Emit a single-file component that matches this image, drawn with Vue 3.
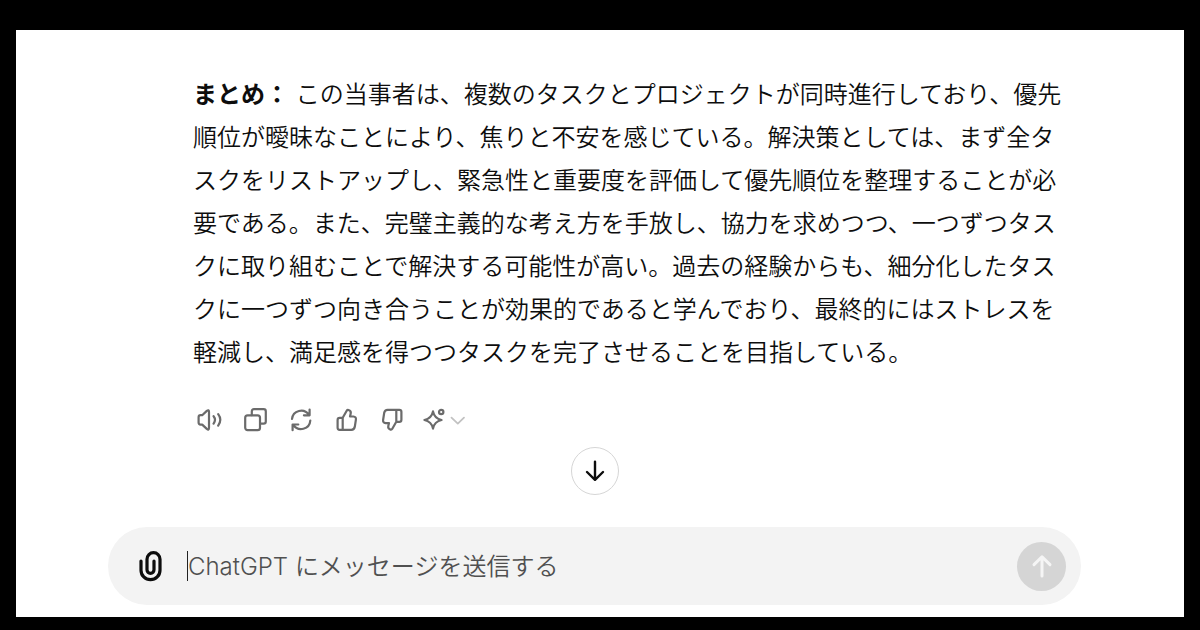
<script setup>
import { ref } from 'vue'

const message = ref('')
const summary =
  'この当事者は、複数のタスクとプロジェクトが同時進行しており、優先順位が曖昧なことにより、焦りと不安を感じている。解決策としては、まず全タスクをリストアップし、緊急性と重要度を評価して優先順位を整理することが必要である。また、完璧主義的な考え方を手放し、協力を求めつつ、一つずつタスクに取り組むことで解決する可能性が高い。過去の経験からも、細分化したタスクに一つずつ向き合うことが効果的であると学んでおり、最終的にはストレスを軽減し、満足感を得つつタスクを完了させることを目指している。'
</script>

<template>
  <div class="page">
    <main class="chat">
      <div class="column">
        <article class="reply">
          <p><strong>まとめ：</strong> {{ summary }}</p>
          <div class="actions">
            <div class="group">
              <button type="button" aria-label="読み上げる">
                <svg width="28" height="28" viewBox="0 0 28 28">
                  <path d="M3.6 11.2Q3.6 9.2 5.6 9.2H7.2L11.8 4.9Q14 3.2 14 6V21.8Q14 24.6 11.8 22.9L7.2 18.6H5.6Q3.6 18.6 3.6 16.6Z" />
                  <path d="M18.6 10.2Q21.4 13.8 18.6 17.6M23.2 8.2Q27.4 13.8 23.2 19.6" />
                </svg>
              </button>
              <button type="button" aria-label="コピーする">
                <svg width="28" height="28" viewBox="0 0 28 28">
                  <rect x="4.2" y="9.3" width="14.8" height="14.8" rx="2.4" />
                  <path d="M10.8 9.2V5.4Q10.8 3.2 13 3.2H22.6Q24.8 3.2 24.8 5.4V15.4Q24.8 17.6 22.6 17.6H19.2" />
                </svg>
              </button>
              <button type="button" aria-label="再生成する">
                <svg width="28" height="28" viewBox="0 0 28 28">
                  <path d="M5 13A9.2 9.2 0 0 1 21.8 8.8M22.6 3.6V9.3H16.9" />
                  <path d="M23.3 14.5A9.2 9.2 0 0 1 6.4 18.9M5.6 24.2V18.5H11.3" />
                </svg>
              </button>
              <button type="button" aria-label="良い回答">
                <svg width="28" height="28" viewBox="0 0 28 28">
                  <path d="M9.7 11.8L13.7 4.8Q14.3 3.7 15.5 4Q18.3 4.8 17.7 7.5L17 10.5H20.4Q23.3 10.8 22.9 13.6L21.8 20.8Q21.2 23.8 18.4 23.8H6.6Q4.6 23.8 4.6 21.8V13.9Q4.6 11.8 6.7 11.8H9.7V23.8" />
                </svg>
              </button>
              <button type="button" aria-label="良くない回答">
                <svg width="28" height="28" viewBox="0 0 28 28">
                  <path transform="rotate(180 13.5 13.8)" d="M9.7 11.8L13.7 4.8Q14.3 3.7 15.5 4Q18.3 4.8 17.7 7.5L17 10.5H20.4Q23.3 10.8 22.9 13.6L21.8 20.8Q21.2 23.8 18.4 23.8H6.6Q4.6 23.8 4.6 21.8V13.9Q4.6 11.8 6.7 11.8H9.7V23.8" />
                </svg>
              </button>
            </div>
            <button type="button" aria-label="モデルを変更する">
              <svg width="46" height="28" viewBox="0 0 46 28">
                <path d="M12 5.4Q13.4 12.6 20.6 14Q13.4 15.4 12 22.6Q10.6 15.4 3.4 14Q10.6 12.6 12 5.4Z" />
                <circle cx="20.2" cy="6" r="2.2" />
                <path class="chevron" d="M30.5 11.6L36.8 17.6L43 11.6" />
              </svg>
            </button>
          </div>
        </article>

        <button type="button" class="scroll" aria-label="一番下へ移動">
          <svg width="28" height="28" viewBox="0 0 28 28">
            <path d="M14 4.6V22.6M6 15L14 22.8L22 15" />
          </svg>
        </button>

        <form class="composer" @submit.prevent>
          <button type="button" class="attach" aria-label="ファイルを添付">
            <svg width="28" height="34" viewBox="0 0 28 34">
              <path d="M4 12V21.2A9.5 9.5 0 0 0 23 21.2V10.2A6.5 6.5 0 0 0 10 10.2V20.8A3.5 3.5 0 0 0 17 20.8V12" />
            </svg>
          </button>
          <input v-model="message" type="text" aria-label="メッセージ" placeholder="ChatGPT にメッセージを送信する" />
          <button type="submit" class="send" aria-label="送信">
            <svg width="28" height="28" viewBox="0 0 28 28">
              <path d="M14 24V5M6 12.6L14 4.8L22 12.6" />
            </svg>
          </button>
        </form>
      </div>
    </main>
  </div>
</template>

<style>
body {
  margin: 0;
  background: #000;
}
</style>

<style scoped>
.page {
  box-sizing: border-box;
  min-height: 100vh;
  padding: 30px 16px 13px;
  display: flex;
  background: #000;
  font-family: Inter, "Noto Sans CJK JP", sans-serif;
}
.chat {
  flex: 1;
  display: flex;
  justify-content: center;
  padding: 43px 103px 12px 92px;
  background: #fff;
}
.column {
  flex: 1;
  max-width: 973px;
  display: flex;
  flex-direction: column;
}
.reply {
  padding: 0 8px 0 85px;
}
p {
  margin: 0;
  color: #0d0d0d;
  font-size: 24px;
  font-weight: 350;
  line-height: 43px;
}
strong {
  font-weight: 700;
}
button {
  display: flex;
  align-items: center;
  justify-content: center;
  flex: none;
  margin: 0;
  padding: 0;
  border: 0;
  background: none;
  cursor: pointer;
}
svg {
  display: block;
  fill: none;
  stroke: #6b6b6b;
  stroke-width: 2.2;
  stroke-linecap: round;
  stroke-linejoin: round;
}
.actions {
  display: flex;
  gap: 14px;
  margin-top: 32px;
  padding-left: 2px;
}
.group {
  display: flex;
  gap: 18px;
}
.chevron {
  stroke: #c2c2c2;
  stroke-width: 1.8;
}
.scroll {
  box-sizing: border-box;
  width: 48px;
  height: 48px;
  margin: 13px auto 32px;
  border: 1px solid #d6d6d6;
  border-radius: 50%;
  background: #fff;
}
.scroll svg {
  stroke: #0d0d0d;
  stroke-width: 2.4;
}
.composer {
  box-sizing: border-box;
  min-height: 78px;
  margin-top: auto;
  padding: 0 15px 0 29px;
  display: flex;
  align-items: center;
  gap: 22px;
  border-radius: 39px;
  background: #f3f3f3;
}
.attach svg {
  stroke: #0d0d0d;
  stroke-width: 3.2;
}
input {
  flex: 1;
  min-width: 0;
  height: 30px;
  padding: 0;
  border: 0;
  border-left: 1px solid #222;
  outline: 0;
  background: none;
  color: #0d0d0d;
  font: inherit;
  font-size: 24px;
  font-weight: 350;
}
input::placeholder {
  color: #505050;
  opacity: 1;
}
.send {
  width: 49px;
  height: 49px;
  border-radius: 50%;
  background: #d5d5d5;
}
.send svg {
  stroke: #f5f5f5;
  stroke-width: 3;
}
</style>
